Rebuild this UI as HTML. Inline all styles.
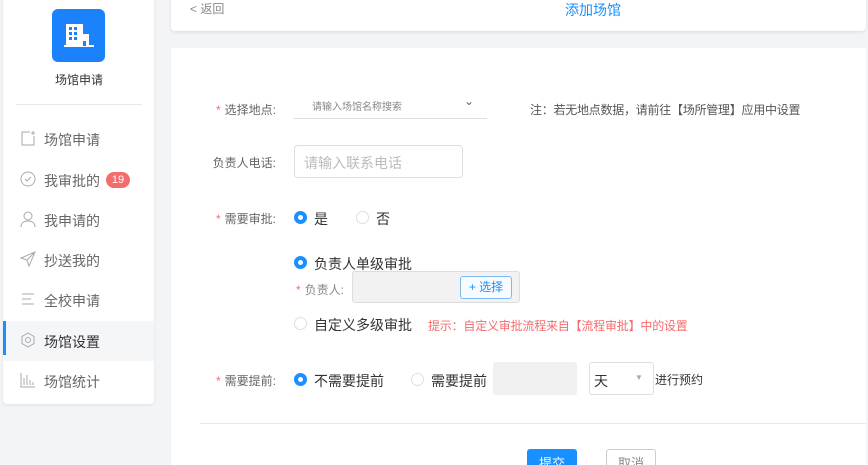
<!DOCTYPE html>
<html style="overflow:hidden;width:868px;height:465px"><head><meta charset="utf-8"><style>
*{box-sizing:border-box;margin:0;padding:0}
body{width:868px;height:465px;overflow:hidden;background:#f3f4f7;font-family:"Liberation Sans","Noto Sans CJK SC",sans-serif;position:relative;color:#333}
.a{position:absolute;white-space:nowrap}
.side{left:3px;top:-4px;width:151px;height:408px;background:#fff;border-radius:4px;box-shadow:0 1px 3px rgba(0,0,0,.08)}
.menu{left:3px;width:151px;height:40px;font-size:14px;color:#666}
.menu span{position:absolute;left:41px;top:11px}
.menu svg{position:absolute;left:17px;top:11px}
.lbl{font-size:12px;color:#666;text-align:right;width:120px}
.star{color:#f56c6c;margin-right:4px}
.rad{width:13px;height:13px;border-radius:50%;border:1px solid #dcdfe6;background:#fff}
.rad.on{border:4px solid #1890ff}
.t14{font-size:14px;color:#333}
</style></head><body>
<div class="a side"></div>
<div class="a" style="left:52px;top:9px;width:53px;height:53px;background:#1a82fb;border-radius:6px">
<svg width="53" height="53" viewBox="0 0 53 53"><rect x="14" y="15" width="17" height="22" fill="#fff"/><rect x="28" y="25" width="9" height="12" fill="#fff"/><rect x="12" y="36" width="30" height="2" fill="#fff"/><g fill="#1a82fb"><rect x="17" y="18" width="3" height="3"/><rect x="22" y="18" width="3" height="3"/><rect x="17" y="23" width="3" height="3"/><rect x="22" y="23" width="3" height="3"/><rect x="17" y="28" width="3" height="3"/><rect x="22" y="28" width="3" height="3"/><rect x="31" y="32" width="3" height="5"/></g></svg></div>
<div class="a" style="left:55px;top:71px;font-size:12px;color:#333">场馆申请</div>
<div class="a" style="left:16px;top:104px;width:126px;height:1px;background:#e8e8e8"></div>
<div class="a menu" style="top:119px"><svg width="16" height="16" viewBox="0 0 16 16" fill="none" stroke="#aaa"><path d="M10 2H2v13h12V6M13 1v4M11 3h4"/></svg><span>场馆申请</span></div>
<div class="a menu" style="top:160px"><svg width="16" height="16" viewBox="0 0 16 16" fill="none" stroke="#aaa"><circle cx="8" cy="8" r="7"/><path d="M5 8l2 2 4-4"/></svg><span>我审批的</span><div class="a" style="left:103px;top:12px;width:24px;height:16px;border-radius:8px;background:#f56c6c;color:#fff;font-size:11px;text-align:center;line-height:16px">19</div></div>
<div class="a menu" style="top:200px"><svg width="16" height="16" viewBox="0 0 16 16" fill="none" stroke="#aaa"><circle cx="8" cy="5" r="4"/><path d="M1 16c0-4 3-6 7-6s7 2 7 6"/></svg><span>我申请的</span></div>
<div class="a menu" style="top:240px"><svg width="16" height="16" viewBox="0 0 16 16" fill="none" stroke="#aaa"><path d="M15 1L1 7l6 2 2 6z M7 9l8-8"/></svg><span>抄送我的</span></div>
<div class="a menu" style="top:280px"><svg width="16" height="16" viewBox="0 0 16 16" fill="none" stroke="#aaa"><path d="M2 3h12M2 8h9M2 13h12"/></svg><span>全校申请</span></div>
<div class="a menu" style="top:321px;background:#f5f6f8;color:#333"><div class="a" style="left:0;top:0;width:3px;height:34px;background:#1890ff"></div><svg width="16" height="16" viewBox="0 0 16 16" fill="none" stroke="#aaa"><path d="M8 1l6 3.5v7L8 15l-6-3.5v-7z"/><circle cx="8" cy="8" r="2.5"/></svg><span>场馆设置</span></div>
<div class="a menu" style="top:361px"><svg width="16" height="16" viewBox="0 0 16 16" fill="none" stroke="#aaa"><path d="M1 1v14h14M4 13V6M7 13V3M10 13V8M13 13V10"/></svg><span>场馆统计</span></div>

<div class="a" style="left:171px;top:-4px;width:695px;height:35px;background:#fff;border-radius:4px;box-shadow:0 1px 3px rgba(0,0,0,.1)"></div>
<div class="a" style="left:190px;top:0;font-size:12px;color:#888">&lt; 返回</div>
<div class="a" style="left:565px;top:0;font-size:14px;color:#1890ff">添加场馆</div>

<div class="a" style="left:171px;top:48px;width:695px;height:420px;background:#fff"></div>
<div class="a lbl" style="left:156px;top:101px"><span class="star">*</span>选择地点:</div>
<div class="a" style="left:294px;top:96px;width:193px;height:23px;border-bottom:1px solid #ddd"></div>
<div class="a" style="left:312px;top:98px;font-size:10px;color:#888">请输入场馆名称搜索</div>
<div class="a" style="left:464px;top:94px;font-size:12px;color:#666">&#8964;</div>
<div class="a" style="left:530px;top:101px;font-size:12px;color:#555;letter-spacing:-0.25px">注：若无地点数据，请前往【场所管理】应用中设置</div>

<div class="a lbl" style="left:156px;top:154px">负责人电话:</div>
<div class="a" style="left:294px;top:145px;width:169px;height:33px;border:1px solid #dcdfe6;border-radius:4px"></div>
<div class="a" style="left:304px;top:153px;font-size:14px;color:#bbb">请输入联系电话</div>

<div class="a lbl" style="left:156px;top:210px"><span class="star">*</span>需要审批:</div>
<div class="a rad on" style="left:294px;top:211px"></div><div class="a t14" style="left:314px;top:209px">是</div>
<div class="a rad" style="left:356px;top:211px"></div><div class="a t14" style="left:376px;top:209px">否</div>

<div class="a rad on" style="left:294px;top:256px"></div><div class="a t14" style="left:314px;top:254px">负责人单级审批</div>
<div class="a" style="left:296px;top:281px;font-size:12px;color:#888"><span class="star">*</span>负责人:</div>
<div class="a" style="left:352px;top:271px;width:168px;height:32px;background:#f2f2f2;border:1px solid #ddd;border-radius:3px"></div>
<div class="a" style="left:460px;top:276px;width:52px;height:23px;border:1px solid #7eb8f5;border-radius:3px;background:#f7fbff;font-size:12px;color:#1890ff;text-align:center;line-height:21px">+ 选择</div>
<div class="a rad" style="left:294px;top:317px"></div><div class="a t14" style="left:314px;top:315px">自定义多级审批</div>
<div class="a" style="left:428px;top:317px;font-size:12px;color:#f56c6c;letter-spacing:-0.2px">提示：自定义审批流程来自【流程审批】中的设置</div>

<div class="a lbl" style="left:156px;top:372px"><span class="star">*</span>需要提前:</div>
<div class="a rad on" style="left:294px;top:373px"></div><div class="a t14" style="left:314px;top:371px">不需要提前</div>
<div class="a rad" style="left:411px;top:373px"></div><div class="a t14" style="left:431px;top:371px">需要提前</div>
<div class="a" style="left:493px;top:362px;width:84px;height:33px;background:#f0f0f0;border-radius:3px"></div>
<div class="a" style="left:589px;top:362px;width:65px;height:33px;border:1px solid #dcdfe6;border-radius:3px"></div>
<div class="a t14" style="left:594px;top:371px">天</div>
<div class="a" style="left:635px;top:373px;font-size:8px;color:#aaa">▼</div>
<div class="a" style="left:655px;top:371px;font-size:12px;color:#333">进行预约</div>

<div class="a" style="left:200px;top:423px;width:666px;height:1px;background:#e8e8e8"></div>
<div class="a" style="left:527px;top:449px;width:50px;height:16px;overflow:hidden;background:#1890ff;border-radius:3px 3px 0 0;color:#fff;font-size:13px;text-align:center;line-height:30px">提交</div>
<div class="a" style="left:606px;top:449px;width:50px;height:16px;overflow:hidden;border:1px solid #ccc;border-bottom:none;border-radius:3px 3px 0 0;color:#888;font-size:13px;text-align:center;line-height:28px">取消</div>
</body></html>
